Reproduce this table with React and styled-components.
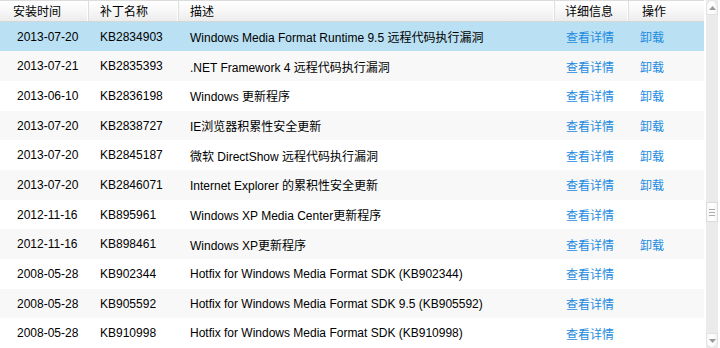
import React from 'react';
import styled, { createGlobalStyle } from 'styled-components';

const GlobalStyle = createGlobalStyle`
  html, body {
    margin: 0;
    padding: 0;
    background: #fff;
  }
  body {
    font-family: "Liberation Sans", "Noto Sans CJK SC", sans-serif;
    font-size: 12px;
    color: #000;
  }
`;

const Frame = styled.div`
  display: flex;
  width: 720px;
  height: 348px;
  overflow: hidden;
`;

const Grid = styled.div`
  width: 704px;
  display: flex;
  flex-direction: column;
`;

const cols = '89px 90px 376px 74px 75px';

const Header = styled.div`
  display: grid;
  grid-template-columns: ${cols};
  height: 20px;
  border-top: 1px solid #dcdcdc;
  border-bottom: 1px solid #d6d6d6;
  background: linear-gradient(#ffffff, #f7f7f7 50%, #ececec);
  box-sizing: content-box;
`;

const HeadCell = styled.div`
  display: flex;
  align-items: center;
  padding-left: ${props => props.pad || '12px'};
  border-right: 1px solid #dedede;
  box-shadow: inset -1px 0 0 #fff;
  color: #000;
  &:last-child {
    border-right: none;
    box-shadow: none;
  }
`;

const Row = styled.div`
  display: grid;
  grid-template-columns: ${cols};
  height: 30px;
  background: ${props => props.selected ? '#bae0f3' : props.alt ? '#f8f8f8' : '#fff'};
`;

const Cell = styled.div`
  display: flex;
  align-items: center;
  padding-left: ${props => props.pad || '11px'};
  white-space: nowrap;
  color: #000;
`;

const Link = styled.a`
  color: #1d8be0;
  text-decoration: none;
  cursor: pointer;
`;

const ScrollBar = styled.div`
  width: 12px;
  margin-left: 2px;
  background: #ebebeb;
  display: flex;
  flex-direction: column;
  position: relative;
`;

const ArrowBtn = styled.div`
  height: 15px;
  background: linear-gradient(to right, #f7f7f7, #fff 50%, #f0f0f0);
  border-radius: ${props => props.down ? '0 0 6px 6px' : '6px 6px 0 0'};
  display: flex;
  align-items: center;
  justify-content: center;
  box-shadow: inset 0 0 0 1px #e2e2e2;
`;

const Track = styled.div`
  flex: 1;
  position: relative;
`;

const Thumb = styled.div`
  position: absolute;
  left: 0;
  right: 0;
  top: 187px;
  height: 20px;
  background: linear-gradient(to right, #f4f4f4, #fff 50%, #f2f2f2);
  box-shadow: inset 0 0 0 1px #dcdcdc;
  display: flex;
  flex-direction: column;
  align-items: center;
  justify-content: center;
  gap: 2px;
`;

const Grip = styled.span`
  width: 6px;
  height: 1px;
  background: #a9a9a9;
`;

const Arrow = ({ down }) => (
  <svg width="7" height="4" viewBox="0 0 7 4">
    <polygon points={down ? '0,0 7,0 3.5,4' : '0,4 7,4 3.5,0'} fill="#9a9a9a" />
  </svg>
);

const rows = [
  ['2013-07-20', 'KB2834903', 'Windows Media Format Runtime 9.5 远程代码执行漏洞', true],
  ['2013-07-21', 'KB2835393', '.NET Framework 4 远程代码执行漏洞', true],
  ['2013-06-10', 'KB2836198', 'Windows 更新程序', true],
  ['2013-07-20', 'KB2838727', 'IE浏览器积累性安全更新', true],
  ['2013-07-20', 'KB2845187', '微软 DirectShow 远程代码执行漏洞', true],
  ['2013-07-20', 'KB2846071', 'Internet Explorer 的累积性安全更新', true],
  ['2012-11-16', 'KB895961', 'Windows XP Media Center更新程序', false],
  ['2012-11-16', 'KB898461', 'Windows XP更新程序', true],
  ['2008-05-28', 'KB902344', 'Hotfix for Windows Media Format SDK (KB902344)', false],
  ['2008-05-28', 'KB905592', 'Hotfix for Windows Media Format SDK 9.5 (KB905592)', false],
  ['2008-05-28', 'KB910998', 'Hotfix for Windows Media Format SDK (KB910998)', false],
];

export default function App() {
  return (
    <>
      <GlobalStyle />
      <Frame>
        <Grid>
          <Header>
            <HeadCell pad="13px">安装时间</HeadCell>
            <HeadCell pad="11px">补丁名称</HeadCell>
            <HeadCell pad="11px">描述</HeadCell>
            <HeadCell pad="10px">详细信息</HeadCell>
            <HeadCell pad="13px">操作</HeadCell>
          </Header>
          {rows.map(([date, kb, desc, canRemove], i) => (
            <Row key={kb} selected={i === 0} alt={i % 2 === 1}>
              <Cell pad="17px">{date}</Cell>
              <Cell pad="11px">{kb}</Cell>
              <Cell pad="11px">{desc}</Cell>
              <Cell pad="11px"><Link>查看详情</Link></Cell>
              <Cell pad="11px">{canRemove && <Link>卸载</Link>}</Cell>
            </Row>
          ))}
        </Grid>
        <ScrollBar>
          <ArrowBtn><Arrow /></ArrowBtn>
          <Track>
            <Thumb>
              <Grip />
              <Grip />
              <Grip />
            </Thumb>
          </Track>
          <ArrowBtn down><Arrow down /></ArrowBtn>
        </ScrollBar>
      </Frame>
    </>
  );
}
